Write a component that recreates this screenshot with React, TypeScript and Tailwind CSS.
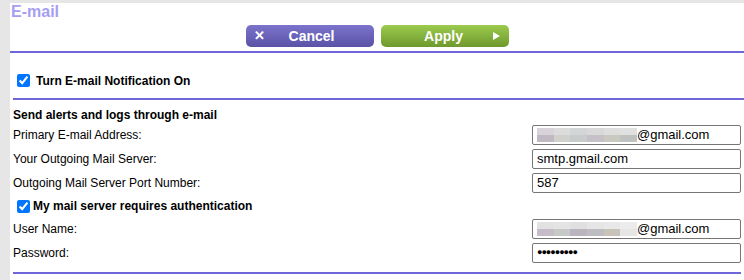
import React from "react"

const font = { fontFamily: '"Liberation Sans", Arial, sans-serif' }

const blur1 = [
  ["#d8d3da", "#c0b9c3"],
  ["#dcdcdc", "#d1d1cb"],
  ["#d2d6d6", "#c8cbcb"],
  ["#d9d9d9", "#c6c0c8"],
  ["#dedede", "#c9c9bf"],
  ["#e0e0e0", "#bfc1c1"],
]
const blur2 = [
  ["#e2e2e2", "#c4bcc6"],
  ["#e4e4e4", "#c6c9c7"],
  ["#e0e0e0", "#b9b4bd"],
  ["#e6e6e6", "#bdbcc0"],
  ["#e8e8e8", "#c9c2bb"],
  ["#ececec", "#e6e6e6"],
]

function Blurred({ cells }: { cells: string[][] }) {
  return (
    <span className="flex h-[14px] w-[100px] shrink-0">
      {cells.map((c, i) => (
        <span key={i} className="flex flex-1 flex-col">
          <span className="flex-1" style={{ backgroundColor: c[0] }} />
          <span className="flex-1" style={{ backgroundColor: c[1] }} />
        </span>
      ))}
    </span>
  )
}

function Box({ children }: { children: React.ReactNode }) {
  return (
    <div className="flex h-[20px] w-[209px] items-center rounded-[2px] border border-[#767676] bg-white pl-[4px] text-[13px] text-black">
      {children}
    </div>
  )
}

function Row({ label, children }: { label: string; children: React.ReactNode }) {
  return (
    <div className="flex h-[20px] items-center justify-between">
      <span className="text-[12px] text-black">{label}</span>
      {children}
    </div>
  )
}

export default function App() {
  return (
    <div className="h-[280px] w-[744px] overflow-hidden bg-[#e6e6e6] pl-[10px] pt-[3px]" style={font}>
      <div className="h-full bg-white">
        <h1 className="h-[18px] pl-[1px] text-[16px] font-bold leading-[18px] text-[#a59ef3]">E-mail</h1>

        <div className="flex h-[30px] items-start justify-center gap-[7px] pt-[4px]">
          <button className="flex h-[22px] w-[128px] items-center rounded-[5px] bg-gradient-to-b from-[#7c74cc] to-[#5a52a6] pl-[8px] text-[14px] font-bold text-white">
            <span className="w-[10px] text-[13px]">✕</span>
            <span className="flex-1 pr-[14px] text-center">Cancel</span>
          </button>
          <button className="flex h-[22px] w-[128px] items-center rounded-[5px] bg-gradient-to-b from-[#9ccb4e] to-[#6f992d] pr-[9px] text-[14px] font-bold text-white">
            <span className="flex-1 pl-[14px] text-center">Apply</span>
            <svg width="7" height="8" viewBox="0 0 7 8">
              <path d="M0 0 L7 4 L0 8 Z" fill="white" />
            </svg>
          </button>
        </div>

        <div className="h-[2px] bg-[#6f66da]" />

        <div className="flex h-[45px] items-center gap-[6px] pl-[7px] pt-[10px]">
          <input type="checkbox" defaultChecked className="m-0 h-[13px] w-[13px] accent-[#0075ff]" />
          <span className="text-[12px] font-bold text-black">Turn E-mail Notification On</span>
        </div>

        <div className="ml-[3px] h-[2px] bg-[#6f66da]" />

        <div className="pl-[3px] pr-[3px]">
          <div className="flex h-[25px] items-center pt-[4px] text-[12px] font-bold text-black">
            Send alerts and logs through e-mail
          </div>
          <div className="flex flex-col gap-[4px]">
            <Row label="Primary E-mail Address:">
              <Box>
                <Blurred cells={blur1} />
                <span>@gmail.com</span>
              </Box>
            </Row>
            <Row label="Your Outgoing Mail Server:">
              <Box>smtp.gmail.com</Box>
            </Row>
            <Row label="Outgoing Mail Server Port Number:">
              <Box>587</Box>
            </Row>
          </div>

          <div className="flex h-[26px] items-center gap-[3px] pl-[4px]">
            <input type="checkbox" defaultChecked className="m-0 h-[13px] w-[13px] accent-[#0075ff]" />
            <span className="text-[12px] font-bold text-black">My mail server requires authentication</span>
          </div>

          <div className="flex flex-col gap-[4px]">
            <Row label="User Name:">
              <Box>
                <Blurred cells={blur2} />
                <span>@gmail.com</span>
              </Box>
            </Row>
            <Row label="Password:">
              <Box>
                <span className="text-[9px] tracking-[-1px]">●●●●●●●●●</span>
              </Box>
            </Row>
          </div>

          <div className="mt-[9px] h-[2px] bg-[#6f66da]" />
        </div>
      </div>
    </div>
  )
}
